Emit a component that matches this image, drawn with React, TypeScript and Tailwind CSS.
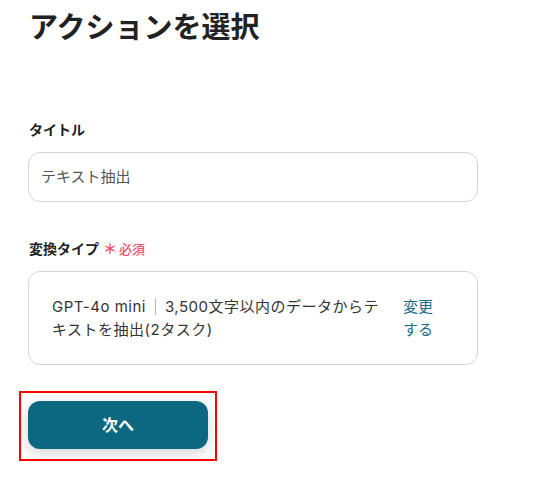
export default function App() {
  return (
    <div
      className="min-h-[480px] w-[544px] bg-white pl-[28px] pt-[8px] text-[#222]"
      style={{ fontFamily: '"Inter", "Noto Sans CJK JP", sans-serif' }}
    >
      <h1 className="pl-px text-[29px] font-bold leading-[40px] text-[#222]">
        アクションを選択
      </h1>

      <div className="mt-[72px] w-[450px]">
        <label className="block pl-px text-[14px] font-bold leading-[20px] text-[#222]">
          タイトル
        </label>
        <div className="mt-[12px] flex h-[50px] items-center rounded-[12px] border border-[#d4d6dc] px-[12px] text-[15px] text-[#555]">
          テキスト抽出
        </div>
      </div>

      <div className="mt-[37px] w-[450px]">
        <div className="flex items-center gap-[4px] pl-px leading-[20px]">
          <span className="text-[14px] font-bold text-[#222]">変換タイプ</span>
          <span className="text-[13px] font-medium text-[#f0506e]">
            <span className="mr-[2px] text-[14px] font-bold">＊</span>必須
          </span>
        </div>
        <div className="mt-[12px] flex h-[94px] items-center rounded-[12px] border border-[#d4d6dc] pl-[23px] pr-[30px]">
          <p className="w-[336px] text-[15px] leading-[23px] tracking-[0.5px] text-[#333]">
            GPT-4o mini
            <span className="mx-[9px] inline-block h-[17px] w-px bg-[#b8b8b8] align-[-3px]" />
            3,500文字以内のデータからテキストを抽出(2タスク)
          </p>
          <span className="ml-[15px] w-[34px] text-[15px] leading-[23px] text-[#1b6b84]">
            変更する
          </span>
        </div>
      </div>

      <div className="ml-[-9px] mt-[26px] inline-block border-2 border-[#ff0000] px-[7px] pb-[10px] pt-[8px]">
        <button className="flex h-[48px] w-[180px] items-center justify-center rounded-[12px] bg-[#0b6880] text-[16px] font-bold text-white shadow-[0_4px_14px_rgba(0,0,0,0.18)]">
          次へ
        </button>
      </div>
    </div>
  );
}
